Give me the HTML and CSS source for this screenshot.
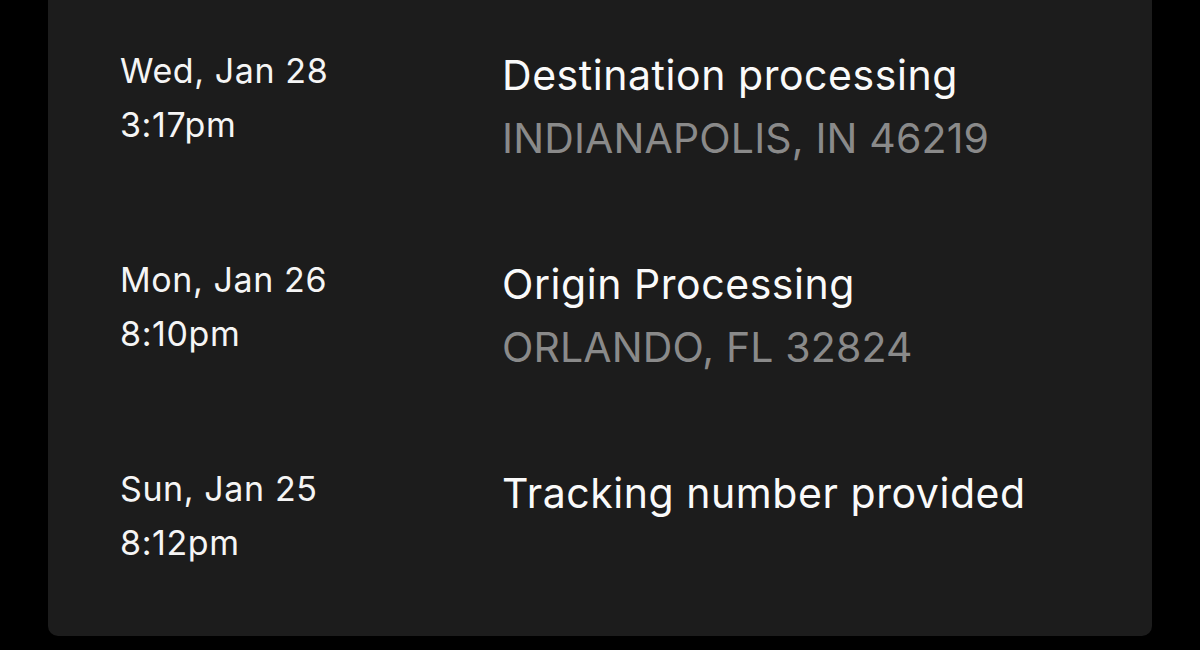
FILE: index.html
```html
<!DOCTYPE html>
<html>
<head>
<meta charset="utf-8">
<link rel="stylesheet" href="styles.css">
</head>
<body>
<div class="card">
  <div class="row">
    <div class="when"><div>Wed, Jan 28</div><div>3:17pm</div></div>
    <div class="what"><div class="title">Destination processing</div><div class="place">INDIANAPOLIS, IN 46219</div></div>
  </div>
  <div class="row">
    <div class="when"><div>Mon, Jan 26</div><div>8:10pm</div></div>
    <div class="what"><div class="title">Origin Processing</div><div class="place">ORLANDO, FL 32824</div></div>
  </div>
  <div class="row">
    <div class="when"><div>Sun, Jan 25</div><div>8:12pm</div></div>
    <div class="what"><div class="title">Tracking number provided</div></div>
  </div>
</div>
</body>
</html>
```
FILE: styles.css
```css
html, body { margin: 0; padding: 0; background: #000; }
body { width: 1200px; height: 650px; overflow: hidden; font-family: Inter, "Noto Sans", sans-serif; }
.card {
  margin-left: 48px;
  width: 1104px;
  height: 636px;
  background: #1c1c1c;
  border-radius: 0 0 10px 10px;
  box-sizing: border-box;
  padding: 42px 0 0 72px;
  display: flex;
  flex-direction: column;
  overflow: hidden;
}
.row { display: flex; height: 209px; flex-shrink: 0; }
.when { width: 382px; padding-top: 2px; color: #f5f5f5; font-size: 34px; line-height: 54px; letter-spacing: 0.6px; }
.what { color: #fafafa; padding-top: 2px; }
.title { font-size: 41px; line-height: 63px; letter-spacing: 0.55px; }
.place { font-size: 41px; line-height: 63px; letter-spacing: 0.15px; color: #8a8a8a; }
```
